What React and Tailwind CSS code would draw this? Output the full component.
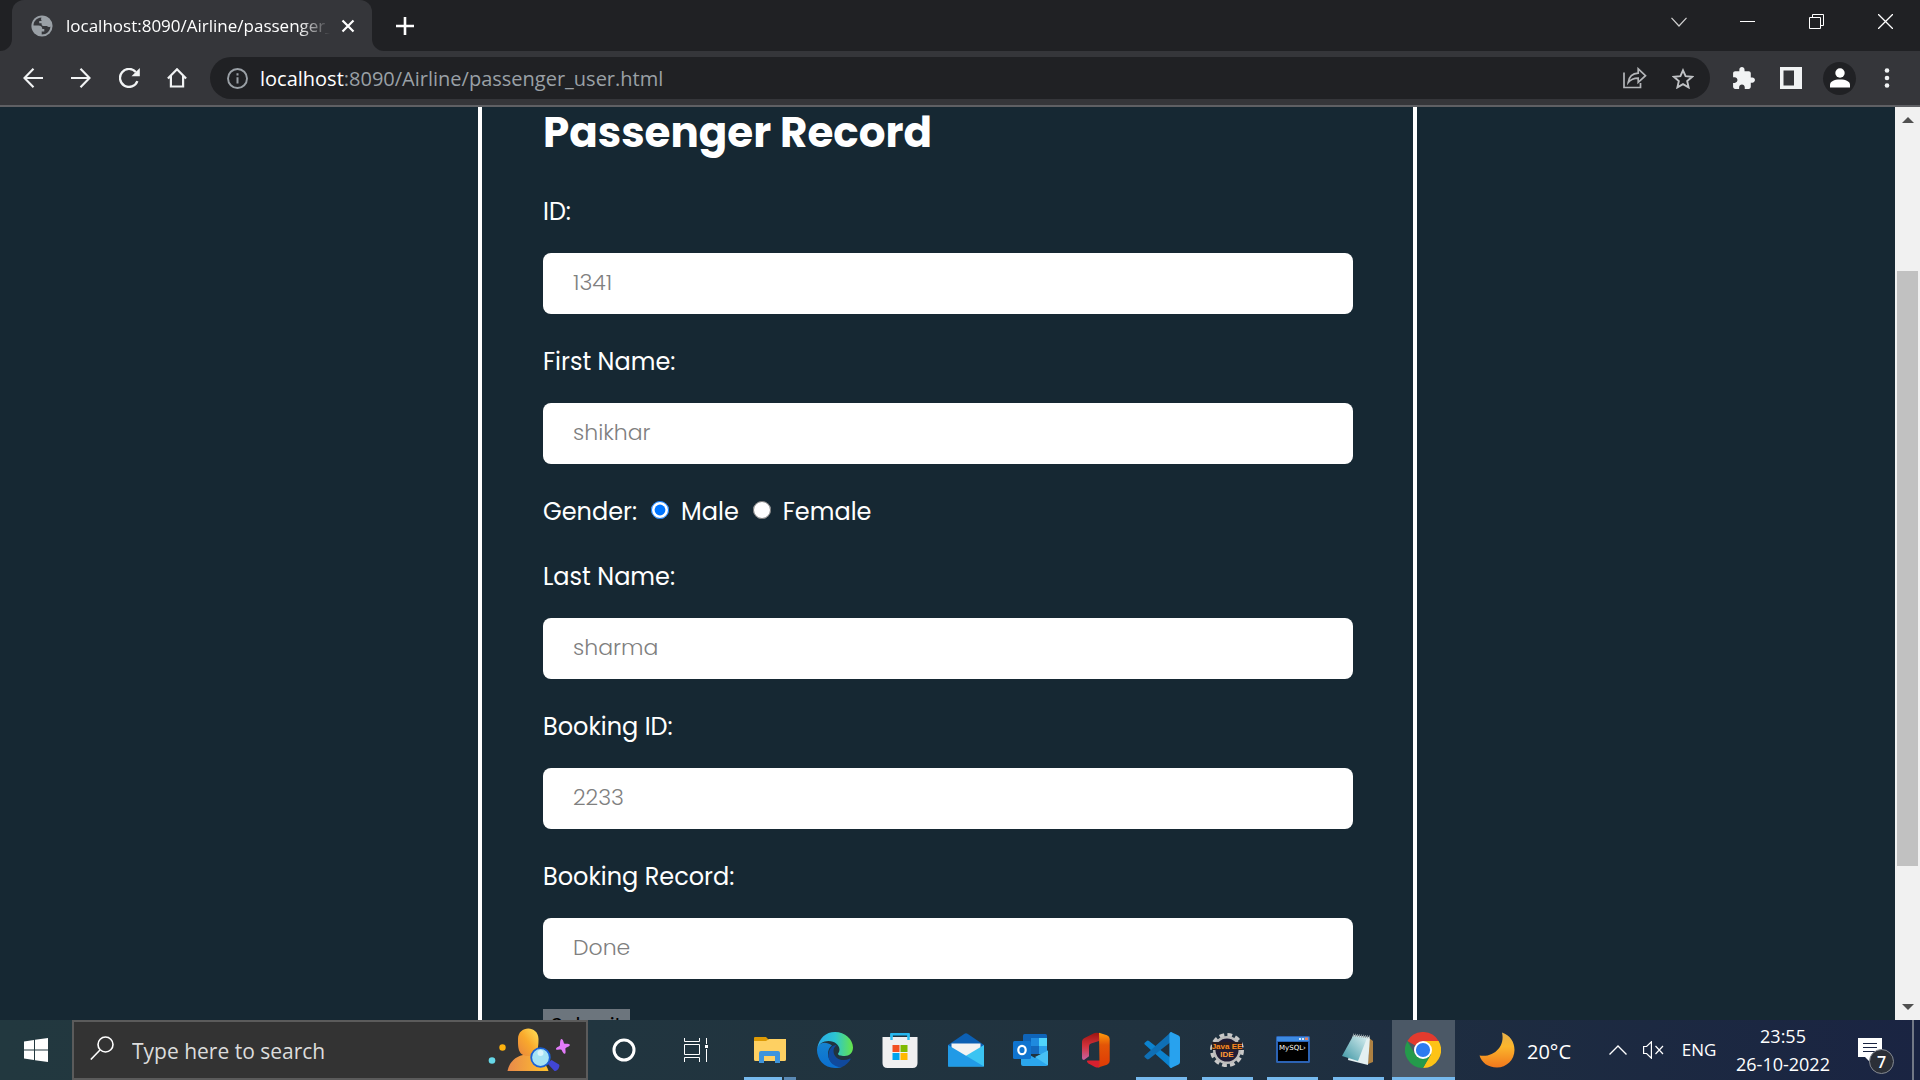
import React from "react";

const UI = "font-['Open_Sans','Noto_Sans',sans-serif]";

function IconButton({ label, className = "", children }) {
  return (
    <button type="button" aria-label={label} className={`flex shrink-0 items-center justify-center ${className}`}>
      {children}
    </button>
  );
}

function TabStrip() {
  return (
    <header className="flex h-[51px] shrink-0 items-stretch bg-[#202124]">
      <div className="flex w-3 shrink-0 bg-[#35363a]">
        <span className="w-full rounded-br-[12px] bg-[#202124]" />
      </div>
      <div className="flex w-[360px] shrink-0 items-center rounded-t-[12px] bg-[#35363a] pl-[19px] pr-3">
        <svg width="22" height="22" viewBox="0 0 22 22" className="shrink-0">
          <circle cx="11" cy="11" r="10.6" fill="#9aa0a6" />
          <path
            d="M10.500 2.500C5 3 2.500 7 2.500 10.500h5c2.500 0 3.800 1.300 3.800 3.400h2v2.600h-2.600v2.900c5 0 8.500-3.500 8.700-8-.9.900-2.500.9-3.400-.4h-3.600c-1.400 0-2-1.300-1.800-2.700H8.200V6h2.500c-.8-1.200-.8-2.300-.2-3.500z"
            fill="#35363a"
          />
        </svg>
        <span className="ml-[13px] w-[264px] overflow-hidden whitespace-nowrap text-[17px] leading-6 text-white [mask-image:linear-gradient(to_right,black_88%,transparent)]">
          localhost:8090/Airline/passenger_user.html
        </span>
        <IconButton label="Close tab" className="ml-auto h-6 w-6">
          <svg width="14" height="14" viewBox="0 0 14 14" stroke="#fff" strokeWidth="2.2">
            <path d="M1.500 1.500l11 11M12.500 1.500l-11 11" />
          </svg>
        </IconButton>
      </div>
      <div className="flex w-3 shrink-0 bg-[#35363a]">
        <span className="w-full rounded-bl-[12px] bg-[#202124]" />
      </div>
      <IconButton label="New tab" className="w-[42px]">
        <svg width="18" height="18" viewBox="0 0 18 18" stroke="#fff" strokeWidth="2.600">
          <path d="M9 0v18M0 9h18" />
        </svg>
      </IconButton>
      <div className="ml-auto flex h-[43px]">
        <IconButton label="Search tabs" className="w-[68px]">
          <svg width="16" height="10" viewBox="0 0 16 10" fill="none" stroke="#d0d0d0" strokeWidth="1.2">
            <path d="M.5.8L8 9 15.500.8" />
          </svg>
        </IconButton>
        <IconButton label="Minimize" className="w-[69px]">
          <svg width="15" height="1" viewBox="0 0 15 1"><path d="M0 0h15v1H0z" fill="#fff" /></svg>
        </IconButton>
        <IconButton label="Restore" className="w-[69px]">
          <svg width="15" height="15" viewBox="0 0 15 15" fill="none" stroke="#fff">
            <path d="M.5 3.500h11v11H.5zM3.500 3.500v-3h11v11h-3" />
          </svg>
        </IconButton>
        <IconButton label="Close" className="w-[69px]">
          <svg width="15" height="15" viewBox="0 0 15 15" stroke="#fff" strokeWidth="1.300">
            <path d="M0 0l15 15M15 0L0 15" />
          </svg>
        </IconButton>
      </div>
    </header>
  );
}

function Toolbar() {
  return (
    <nav aria-label="Browser toolbar" className="flex h-14 shrink-0 items-center border-b-2 border-[#5f6064] bg-[#35363a] pl-[9px] pr-[9px]">
      <IconButton label="Back" className="h-10 w-12">
        <svg width="20" height="20" viewBox="0 0 20 20" fill="none" stroke="#f1f3f4" strokeWidth="2.100">
          <path d="M20 10H1.500M10.500.8L1.500 10l9 9.200" />
        </svg>
      </IconButton>
      <IconButton label="Forward" className="h-10 w-12">
        <svg width="20" height="20" viewBox="0 0 20 20" fill="none" stroke="#f1f3f4" strokeWidth="2.100">
          <path d="M0 10h18.500M9.500.8l9 9.200-9 9.200" />
        </svg>
      </IconButton>
      <IconButton label="Reload" className="h-10 w-12">
        <svg width="21" height="20" viewBox="0 0 21 20" fill="none">
          <path d="M18.400 13.200A9 9 0 1 1 16.800 4" stroke="#f1f3f4" strokeWidth="2.300" />
          <path d="M20.800 0v8.300h-8.300z" fill="#f1f3f4" />
        </svg>
      </IconButton>
      <IconButton label="Home" className="h-10 w-12">
        <svg width="20" height="20" viewBox="0 0 20 20" fill="none" stroke="#f1f3f4" strokeWidth="2.200">
          <path d="M.9 10.500L10 1.300l9.100 9.200M3.900 8v10.500h12.200V8" />
        </svg>
      </IconButton>
      <div className="ml-[9px] flex h-[42px] min-w-0 flex-1 items-center rounded-full bg-[#202124] pl-[17px] pr-[3px]">
        <svg width="21" height="21" viewBox="0 0 21 21" className="shrink-0" fill="none">
          <circle cx="10.500" cy="10.500" r="9.500" stroke="#9aa0a6" strokeWidth="1.900" />
          <path d="M9.500 9.200h2v6.300h-2zM9.500 5.300h2v2.200h-2z" fill="#9aa0a6" />
        </svg>
        <div role="textbox" aria-label="Address" tabIndex={0} className="ml-3 flex-1 truncate pt-[2px] text-[20px] leading-7 text-[#9aa0a6]">
          <span className="text-white">localhost</span>:8090/Airline/passenger_user.html
        </div>
        <IconButton label="Share" className="h-8 w-12">
          <svg width="24" height="22" viewBox="0 0 24 22" fill="none" stroke="#b4b6b9" strokeWidth="1.700">
            <path d="M1 5.500v15h16.500v-4.500" />
            <path d="M5.200 15.500c.8-5.600 4.300-9 10-9.300V1.800l7.300 6.900-7.300 6.700v-4.300c-4.300 0-7.500 1.200-10 4.400z" />
          </svg>
        </IconButton>
        <IconButton label="Bookmark this page" className="h-8 w-12">
          <svg width="22" height="21" viewBox="0 0 22 21" fill="none" stroke="#c0c2c5" strokeWidth="1.900">
            <path d="M11 2.300l2.600 5.900 6.500.6-4.900 4.300 1.400 6.300L11 16.100l-5.600 3.300 1.400-6.300L1.900 8.800l6.500-.6z" />
          </svg>
        </IconButton>
      </div>
      <IconButton label="Extensions" className="ml-[9px] h-10 w-12">
        <svg width="25" height="25" viewBox="0 0 24 24" fill="#f1f3f4">
          <path d="M20.500 11H19V7c0-1.100-.9-2-2-2h-4V3.500C13 2.120 11.880 1 10.500 1S8 2.120 8 3.500V5H4c-1.100 0-1.990.9-1.990 2v3.800H3.500c1.490 0 2.700 1.210 2.700 2.700s-1.210 2.700-2.700 2.700H2V20c0 1.100.9 2 2 2h3.800v-1.500c0-1.490 1.210-2.700 2.700-2.700 1.490 0 2.700 1.210 2.700 2.700V22H17c1.100 0 2-.9 2-2v-4h1.500c1.380 0 2.500-1.120 2.500-2.500S21.880 11 20.500 11z" />
        </svg>
      </IconButton>
      <IconButton label="Side panel" className="h-10 w-12">
        <svg width="22" height="22" viewBox="0 0 22 22">
          <path fillRule="evenodd" fill="#f1f3f4" d="M0 0h22v22H0zM3.500 3.500v15H14v-15z" />
        </svg>
      </IconButton>
      <IconButton label="Profile" className="ml-2 h-[33px] w-[33px] rounded-full bg-[#202124]">
        <svg width="20" height="20" viewBox="0 0 20 20" fill="#fff">
          <circle cx="10" cy="5" r="4.700" />
          <path d="M0 19.500v-2.500c0-3.600 4-5.500 10-5.500s10 1.900 10 5.500v2.500z" />
        </svg>
      </IconButton>
      <IconButton label="Menu" className="ml-[7px] h-10 w-12">
        <svg width="6" height="20" viewBox="0 0 6 20" fill="#f1f3f4">
          <circle cx="3" cy="2.500" r="2.300" /><circle cx="3" cy="10" r="2.300" /><circle cx="3" cy="17.500" r="2.300" />
        </svg>
      </IconButton>
    </nav>
  );
}

function Field({ id, label, placeholder }) {
  return (
    <div className="mb-[30px]">
      <label htmlFor={id} className="mb-[23px] block text-[24px] leading-9">{label}</label>
      <input
        id={id}
        type="text"
        placeholder={placeholder}
        className="block h-[61px] w-full rounded-[8px] bg-white px-[30px] pb-[2px] text-[22px] font-light text-black outline-none placeholder:text-[#808080]"
      />
    </div>
  );
}

function PassengerPage() {
  return (
    <main className="min-w-0 flex-1 overflow-hidden bg-[#162833] font-[Poppins,Inter,sans-serif] text-white">
      <form onSubmit={(e) => e.preventDefault()} className="mx-auto w-full max-w-[939px] border-x-4 border-white pl-[61px] pr-[60px] pb-16">
        <h1 className="mb-[35px] text-[42px] font-bold leading-[52px]">Passenger Record</h1>
        <Field id="pid" label="ID:" placeholder="1341" />
        <Field id="first" label="First Name:" placeholder="shikhar" />
        <fieldset className="mb-[29px] flex h-9 items-center text-[24px] leading-9">
          <legend className="float-left mr-[14px]">Gender:</legend>
          <label className="mr-[14px] flex items-center gap-3">
            <input type="radio" name="gender" defaultChecked className="mb-1 h-[18px] w-[18px]" />
            Male
          </label>
          <label className="flex items-center gap-3">
            <input type="radio" name="gender" className="mb-1 h-[18px] w-[18px]" />
            Female
          </label>
        </fieldset>
        <Field id="last" label="Last Name:" placeholder="sharma" />
        <Field id="booking" label="Booking ID:" placeholder="2233" />
        <Field id="record" label="Booking Record:" placeholder="Done" />
        <button type="submit" className="block bg-[#6c757d] px-2 text-[20px] leading-8 text-black">Submit</button>
      </form>
    </main>
  );
}

function Scrollbar() {
  return (
    <aside aria-label="Scrollbar" className="flex w-[25px] shrink-0 flex-col items-center bg-[#f1f1f1] py-[10px]">
      <svg width="12" height="6" viewBox="0 0 12 6"><path d="M6 0l6 6H0z" fill="#505050" /></svg>
      <div className="flex w-full flex-1 flex-col items-center">
        <span className="basis-[16.8%]" />
        <span className="w-[21px] basis-[67.5%] bg-[#c1c1c1]" />
      </div>
      <svg width="12" height="6" viewBox="0 0 12 6"><path d="M0 0h12L6 6z" fill="#505050" /></svg>
    </aside>
  );
}

function SearchArt() {
  return (
    <svg width="84" height="50" viewBox="0 0 84 50" className="shrink-0">
      <defs>
        <linearGradient id="person" x1="0" y1="1" x2="1" y2="0">
          <stop offset="0" stopColor="#e8853f" /><stop offset=".5" stopColor="#f9a92c" /><stop offset="1" stopColor="#ffe45c" />
        </linearGradient>
        <linearGradient id="personBase" x1="0" y1="0" x2="1" y2="0">
          <stop offset="0" stopColor="#e9894a" /><stop offset="1" stopColor="#ffc22e" />
        </linearGradient>
      </defs>
      <circle cx="14.500" cy="26.500" r="3.200" fill="#ffb30f" />
      <circle cx="4" cy="39.500" r="3.300" fill="#67d8e8" />
      <path d="M19.500 50c1.500-8 7-14 15.500-16h9c8 2 14 8 16.500 16z" fill="url(#personBase)" />
      <path d="M30 18c0-14 20.500-14 20.500 0 0 7 0 17-10.500 17S30 25 30 18z" fill="url(#person)" />
      <path d="M59.500 42.500l4-3.500 7.500 4.500c1.500 2-1.500 7-4.500 6.500z" fill="#4146d4" />
      <circle cx="52.500" cy="36.500" r="9.300" fill="#a5e2f4" stroke="#1b62d6" strokeWidth="1.800" />
      <circle cx="52.500" cy="32" r="3" fill="#d9f5fc" />
      <path d="M73.500 18c1.800 0 2 4 2.700 4.500s5.300-.5 5.600 1.300-3.800 2.700-4.300 3.400 1 5.200-.7 5.500-2.700-3.600-3.500-4-5 1-5.300-.7 3.300-2.600 3.800-3.300S71.700 18 73.500 18z" fill="#e37bfa" />
    </svg>
  );
}

const icons = {
  Explorer: (
    <svg width="32" height="28" viewBox="0 0 32 28">
      <path d="M0 2Q0 1 1 1h11l3 3v4H0z" fill="#dd9a05" />
      <path d="M0 5h12l3-2h17v20.500q0 1.500-1.500 1.500h-29Q0 25 0 23.500z" fill="#fed062" />
      <path d="M5 27V17q0-2 2-2h17q2 0 2 2v10h-5v-7H10v7z" fill="#3e94dc" />
    </svg>
  ),
  Edge: (
    <svg width="36" height="36" viewBox="0 0 36 36">
      <defs>
        <linearGradient id="edgeTop" x1="0" x2="1"><stop stopColor="#28a7e8" /><stop offset=".5" stopColor="#2cc4d2" /><stop offset="1" stopColor="#66e548" /></linearGradient>
        <linearGradient id="edgeLeft" y2="1" x2="0"><stop stopColor="#1582cf" /><stop offset="1" stopColor="#0b6fd0" /></linearGradient>
      </defs>
      <path d="M0 18C0 27 7 36 18 36c3 0 5-.4 7-1-8-1-14-6-14-13 0-4 1.500-7 4-8.500C8 8 0 11 0 18z" fill="url(#edgeLeft)" />
      <path d="M12 20c-3 8 5 16 13 15 4-1.800 7-5 8.500-7.500.4-.8-.4-1.200-1-.8-7 3.500-16 0-16-7.700 0-3 1.500-5 3-5.600-3-1-6.500 2-7.500 6.600z" fill="#10499c" />
      <path d="M.2 16.500C2 6 9 0 18 0c10 0 18 7.500 18 15.500 0 5-3.500 8.500-8.500 8.500-4 0-6.500-1-6.500-2.300 0-.7 1.500-1.500 1.500-4 0-4.500-4.500-8.700-11-8.700C6 9 1.500 12 .2 16.500z" fill="url(#edgeTop)" />
    </svg>
  ),
  Store: (
    <svg width="36" height="36" viewBox="0 0 36 36">
      <path d="M9.500 8V2.200h17V8" fill="none" stroke="#25b5ed" strokeWidth="2.400" />
      <path d="M.5 5h35v26q0 5-5 5h-25q-5 0-5-5z" fill="#f0f0f1" />
      <path d="M8.300 2h2.400v6H8.300zM25.300 2h2.400v6h-2.400z" fill="#2bbcf0" />
      <path d="M10.500 13h7v7h-7z" fill="#f25022" /><path d="M18.500 13h7v7h-7z" fill="#7fba00" />
      <path d="M10.500 21h7v7h-7z" fill="#00a4ef" /><path d="M18.500 21h7v7h-7z" fill="#ffb900" />
    </svg>
  ),
  Mail: (
    <svg width="36" height="34" viewBox="0 0 36 34">
      <path d="M0 12L16.500.8q1.500-1 3 0L36 12v3H0z" fill="#0c60b4" />
      <path d="M3.500 10.500h29V16L18 24 3.500 16z" fill="#f3f3f3" />
      <path d="M36 12v21.500H0z" fill="#3bc4f2" />
      <path d="M0 12l36 21.500H0z" fill="#219ae6" />
    </svg>
  ),
  Outlook: (
    <svg width="36" height="34" viewBox="0 0 36 34">
      <path d="M10 2.500Q10 1 11.500 1h21Q34 1 34 2.500V20H10z" fill="#0f64b8" />
      <path d="M18 5h8v8h-8z" fill="#1f8ade" /><path d="M26 5h8v8h-8z" fill="#50d4fa" />
      <path d="M18 13h8v8h-8z" fill="#1468bc" /><path d="M26 13h8v8h-8z" fill="#2b9fe8" />
      <path d="M8 17l14 8 13-7.500V31q0 2-2 2H10q-2 0-2-2z" fill="#2ba6ec" />
      <path d="M22 24l13 8.500V17.500z" fill="#47c0f5" />
      <rect y="8" width="18" height="18" rx="1.500" fill="#1074cf" />
      <ellipse cx="9" cy="17" rx="3.700" ry="4.200" fill="none" stroke="#fff" strokeWidth="2.200" />
    </svg>
  ),
  Office: (
    <svg width="30" height="36" viewBox="0 0 30 36">
      <defs>
        <linearGradient id="offA" y2="1" x2="0"><stop stopColor="#9d1511" /><stop offset=".5" stopColor="#d3323d" /><stop offset="1" stopColor="#c563a3" /></linearGradient>
        <linearGradient id="offB" y2="1" x2="0"><stop stopColor="#ff9c0c" /><stop offset=".35" stopColor="#e35507" /><stop offset="1" stopColor="#de3a05" /></linearGradient>
      </defs>
      <path d="M1 9.500Q1 7.500 3 6.300L13 1.200Q15 .3 18 1v8l-8 2.500q-2 .7-2 2.700v10L3 28q-2 0-2-2z" fill="url(#offA)" />
      <path d="M6.500 28.500H19V35q-2 1-5 0l-6.500-3.600q-2.500-1.900-1-2.900z" fill="#d8202f" />
      <path d="M18 .8l8 2.500q2.700 1 2.700 3.700v22q0 2.700-2.700 3.700L17 35.500q1.500-1 1.500-3z" fill="url(#offB)" />
    </svg>
  ),
  "Visual Studio Code": (
    <svg width="36" height="36" viewBox="0 0 36 36">
      <path d="M1 10.500l1.800-1.600q1-.8 2.200 0L28 27v9q-1 0-2-1L.8 12.500q-1-1 .2-2z" fill="#0c83cf" />
      <path d="M1 25.500l1.800 1.600q1 .8 2.200 0L28 9V0q-1 0-2 1L.8 23.500q-1 1 .2 2z" fill="#0f6fb4" />
      <path d="M26 35.500q-.6-.5-.6-2v-31Q25.400 1 26 .5L27 0l7.500 3.500Q36 4.200 36 5.800v24.400q0 1.600-1.500 2.300L27 36z" fill="#28a2ee" />
    </svg>
  ),
  "Java EE IDE": (
    <svg width="36" height="36" viewBox="0 0 36 36" fontFamily="Liberation Sans, sans-serif" fontSize="8" fontWeight="bold" textAnchor="middle">
      <circle cx="18" cy="18" r="15" fill="none" stroke="#c8c8c8" strokeWidth="4" strokeDasharray="4.700 3.150" />
      <circle cx="18" cy="18" r="12.800" fill="#201c35" stroke="#bcbcbc" strokeWidth="2.500" />
      <path d="M3 10h30v8H3z" fill="#2a1d24" />
      <text x="18" y="17" fill="#ff8b1f">Java EE</text>
      <text x="18" y="24.500" fill="#ff9a35">IDE</text>
    </svg>
  ),
  MySQL: (
    <svg width="34" height="28" viewBox="0 0 34 28" fontFamily="DejaVu Sans, sans-serif" fontSize="7">
      <rect width="34" height="27" rx="1.500" fill="#2c63b4" />
      <rect x="1" y="1" width="32" height="4" fill="#3c8ae2" />
      <path d="M23 2h2v2h-2zM26 2h2v2h-2z" fill="#d3e6fa" /><path d="M29 1.500h3v2.500h-3z" fill="#e58162" />
      <path d="M2 6h30v19H2z" fill="#000" />
      <text x="3" y="14" fill="#fff">MySQL›</text>
    </svg>
  ),
  Notepad: (
    <svg width="34" height="34" viewBox="0 0 34 34">
      <defs><linearGradient id="note" x1="1" x2="0" y2="1"><stop stopColor="#d8eef0" /><stop offset="1" stopColor="#3b95a3" /></linearGradient></defs>
      <path d="M28 5l4 3v21l-5 2z" fill="#ae8142" />
      <path d="M12 2l17 2-2 28-20-5z" fill="#e4f0f1" />
      <path d="M12 3l14 2-9 23-16-5z" fill="url(#note)" />
      <path d="M12 2l17 2" stroke="#87949a" strokeWidth="3" strokeDasharray="1 1" />
    </svg>
  ),
  Chrome: (
    <svg width="36" height="36" viewBox="0 0 36 36">
      <path d="M18 18L2.400 9A18 18 0 0 1 33.600 9z" fill="#e33b2e" />
      <path d="M18 9h15.600A18 18 0 0 1 18 36l7.800-13.500z" fill="#fdc316" />
      <path d="M2.400 9A18 18 0 0 0 18 36l7.800-13.500H10.200z" fill="#249a4b" />
      <circle cx="18" cy="18" r="9" fill="#fff" />
      <circle cx="18" cy="18" r="7.100" fill="#2d7cf0" />
    </svg>
  ),
};

const apps = [
  ["Explorer", "double"], ["Edge", ""], ["Store", ""], ["Mail", ""], ["Outlook", ""], ["Office", ""],
  ["Visual Studio Code", "open"], ["Java EE IDE", "open"], ["MySQL", "open"], ["Notepad", "open"], ["Chrome", "active"],
];

function AppSlot({ name, state }) {
  return (
    <button
      type="button"
      aria-label={name}
      className={`flex h-full w-[63px] flex-col items-center ${state === "active" ? "bg-[#4b5866]" : ""}`}
    >
      <span className="flex h-[57px] w-full items-center justify-center pt-[3px]">{icons[name]}</span>
      {state === "open" && <span className="h-[3px] w-[51px] bg-[#76b9ed]" />}
      {state === "active" && <span className="h-[3px] w-full bg-[#76b9ed]" />}
      {state === "double" && (
        <span className="flex h-[3px] w-[52px] gap-[2px]">
          <span className="flex-1 bg-[#76b9ed]" />
          <span className="w-3 bg-[#5a8ab5]" />
        </span>
      )}
    </button>
  );
}

function Taskbar() {
  return (
    <footer className="flex h-[60px] shrink-0 items-center bg-linear-to-r from-[#22383f] via-[#20323f] via-60% to-[#1a2442] text-white">
      <IconButton label="Start" className="h-full w-[72px]">
        <svg width="24" height="24" viewBox="0 0 24 24" fill="#fff">
          <path d="M0 3.400L10 2v9.400H0zM11 1.800L24 0v11.400H11zM0 12.400h10V22L0 20.500zM11 12.400h13V24l-13-1.800z" />
        </svg>
      </IconButton>
      <label className="flex h-full w-[516px] shrink-0 items-center border-2 border-[#5b5b5b] bg-[#333333] pl-4">
        <svg width="24" height="24" viewBox="0 0 24 24" fill="none" stroke="#fff" strokeWidth="1.600" className="mb-1 shrink-0">
          <circle cx="15.500" cy="8.500" r="7.500" /><path d="M10 14L.8 23.500" />
        </svg>
        <input
          type="text"
          aria-label="Search"
          placeholder="Type here to search"
          className="ml-[18px] min-w-0 flex-1 bg-transparent pt-[2px] text-[21px] leading-7 outline-none placeholder:text-[#dcdcdc]"
        />
        <span className="flex h-full w-[98px] shrink-0 items-end pb-[7px]"><SearchArt /></span>
      </label>
      <IconButton label="Cortana" className="h-full w-[72px]">
        <svg width="24" height="24" viewBox="0 0 24 24" fill="none" stroke="#fff" strokeWidth="3"><circle cx="12" cy="12" r="10" /></svg>
      </IconButton>
      <IconButton label="Task view" className="h-full w-[72px]">
        <svg width="24" height="24" viewBox="0 0 24 24" fill="none" stroke="#fff">
          <path d="M.5 0v3.500h15V0M.5 6.500h15v10H.5zM.5 24v-4.500h15V24M22.500 0v6M22.500 11v13" />
          <path d="M21 7h3v3h-3z" fill="#fff" stroke="none" />
        </svg>
      </IconButton>
      <div className="ml-[6px] flex h-full w-[717px] shrink-0 justify-between">
        {apps.map(([name, state]) => <AppSlot key={name} name={name} state={state} />)}
      </div>
      <button type="button" className="ml-6 flex h-full shrink-0 items-center gap-3 text-[20px] leading-7">
        <svg width="36" height="36" viewBox="0 0 36 36">
          <defs><linearGradient id="moon" y2="1" x2="0"><stop stopColor="#e8b04a" /><stop offset=".4" stopColor="#fbb62c" /><stop offset="1" stopColor="#f1771c" /></linearGradient></defs>
          <path d="M23 .5C31 3 35.500 10 35.500 18c0 10-8 17.500-17.500 17.500C9 35.500 2.500 30.500.5 23.500 14 26 26.500 15 23 .5z" fill="url(#moon)" />
        </svg>
        <span className="mt-1">20°C</span>
      </button>
      <div className="ml-auto flex h-full shrink-0 items-center">
        <IconButton label="Show hidden icons" className="h-full w-[34px]">
          <svg width="18" height="10" viewBox="0 0 18 10" fill="none" stroke="#fff" strokeWidth="1.400"><path d="M.5 9.500L9 1l8.500 8.500" /></svg>
        </IconButton>
        <IconButton label="Muted" className="h-full w-9">
          <svg width="21" height="18" viewBox="0 0 21 18" fill="none" stroke="#fff" strokeWidth="1.200">
            <path d="M.6 5.500h3L8.400.8v16.400L3.600 12.500h-3zM12.500 5l7.500 8M20 5l-7.500 8" />
          </svg>
        </IconButton>
        <button type="button" className="h-full w-[56px] text-[17px]">ENG</button>
        <button type="button" className="h-full w-28 text-center text-[18px] leading-7">
          <time className="block">23:55</time>
          <time className="block whitespace-nowrap">26-10-2022</time>
        </button>
        <button type="button" aria-label="Notifications" className="relative ml-4 h-full w-[59px] border-r-2 border-[#727986]">
          <svg width="24" height="24" viewBox="0 0 24 24" className="ml-[3px]">
            <path d="M0 0h24v19H12l0 5-5-5H0z" fill="#fff" />
            <path d="M5 5.500h14M5 9.500h14M5 13.500h14" stroke="#1a2442" />
          </svg>
          <span className="absolute left-[14px] top-[29px] flex h-[25px] w-[25px] items-center justify-center rounded-full border border-[#858a92] bg-[#2b2f37] text-[16px] font-semibold leading-none">
            7
          </span>
        </button>
        <span className="w-[6px]" />
      </div>
    </footer>
  );
}

export default function App() {
  return (
    <div className={`flex h-screen flex-col overflow-hidden ${UI}`}>
      <TabStrip />
      <Toolbar />
      <div className="flex min-h-0 flex-1">
        <PassengerPage />
        <Scrollbar />
      </div>
      <Taskbar />
    </div>
  );
}
